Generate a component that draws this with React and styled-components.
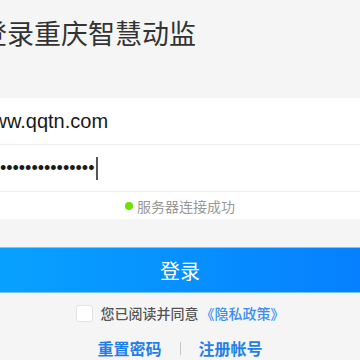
import styled, { createGlobalStyle } from "styled-components";

const GlobalStyle = createGlobalStyle`
  html, body {
    margin: 0;
    padding: 0;
    background: #f5f5f5;
    overflow: hidden;
  }
  body {
    font-family: "Noto Sans CJK SC", "Liberation Sans", sans-serif;
  }
`;

const Page = styled.div`
  width: 360px;
  height: 360px;
  display: flex;
  flex-direction: column;
  overflow: hidden;
`;

const Title = styled.h1`
  margin: 19px 0 52px -20px;
  font-size: 27px;
  line-height: 27px;
  font-weight: 400;
  color: #333;
  white-space: nowrap;
`;

const Fields = styled.div`
  background: #fff;
  display: flex;
  flex-direction: column;
`;

const Row = styled.div`
  height: 46px;
  border-bottom: 1px solid #eeeeee;
  display: flex;
  align-items: center;
  font-family: "Liberation Sans", Arial, sans-serif;
  font-size: ${(p) => p.$size}px;
  color: #1a1a1a;
  white-space: nowrap;
`;

const Value = styled.span`
  margin-left: ${(p) => p.$shift}px;
`;

const Caret = styled.span`
  display: inline-block;
  width: 2px;
  height: 23px;
  margin-left: 2px;
  background: #555;
`;

const Status = styled.div`
  height: 27px;
  display: flex;
  align-items: center;
  justify-content: center;
  gap: 4px;
  font-size: 14px;
  color: #999;
`;

const Dot = styled.span`
  width: 8px;
  height: 8px;
  border-radius: 50%;
  background: #6fe000;
`;

const LoginButton = styled.button`
  margin-top: 28px;
  height: 47px;
  border: none;
  border-top: 1px solid #73c4ff;
  border-bottom: 1px solid #73c4ff;
  background: linear-gradient(90deg, #08a1ff, #0680ff);
  color: #fff;
  font-family: inherit;
  font-size: 20px;
  padding: 0;
`;

const Agree = styled.label`
  margin-top: 10px;
  display: flex;
  align-items: center;
  justify-content: center;
  gap: 8px;
  font-size: 14px;
  font-weight: 500;
  color: #555;
`;

const Box = styled.span`
  width: 15px;
  height: 15px;
  background: #fff;
  border: 1px solid #e2e2e8;
  border-radius: 3px;
`;

const Policy = styled.span`
  color: #3a8ff0;
  margin-left: 2px;
`;

const Links = styled.div`
  margin-top: 13px;
  display: flex;
  align-items: center;
  justify-content: center;
  gap: 18px;
  font-size: 16px;
  font-weight: 700;
  color: #1f80ea;
`;

const Sep = styled.span`
  width: 1px;
  height: 13px;
  background: #c8c8c8;
`;

export default function App() {
  return (
    <Page>
      <GlobalStyle />
      <Title>登录重庆智慧动监</Title>
      <Fields>
        <Row $size={20}>
          <Value $shift={-22}>www.qqtn.com</Value>
        </Row>
        <Row $size={18}>
          <Value $shift={-19}>{"•".repeat(18)}</Value>
          <Caret />
        </Row>
        <Status>
          <Dot />
          服务器连接成功
        </Status>
      </Fields>
      <LoginButton>登录</LoginButton>
      <Agree>
        <Box />
        <span>
          您已阅读并同意
          <Policy>《隐私政策》</Policy>
        </span>
      </Agree>
      <Links>
        <span>重置密码</span>
        <Sep />
        <span>注册帐号</span>
      </Links>
    </Page>
  );
}
